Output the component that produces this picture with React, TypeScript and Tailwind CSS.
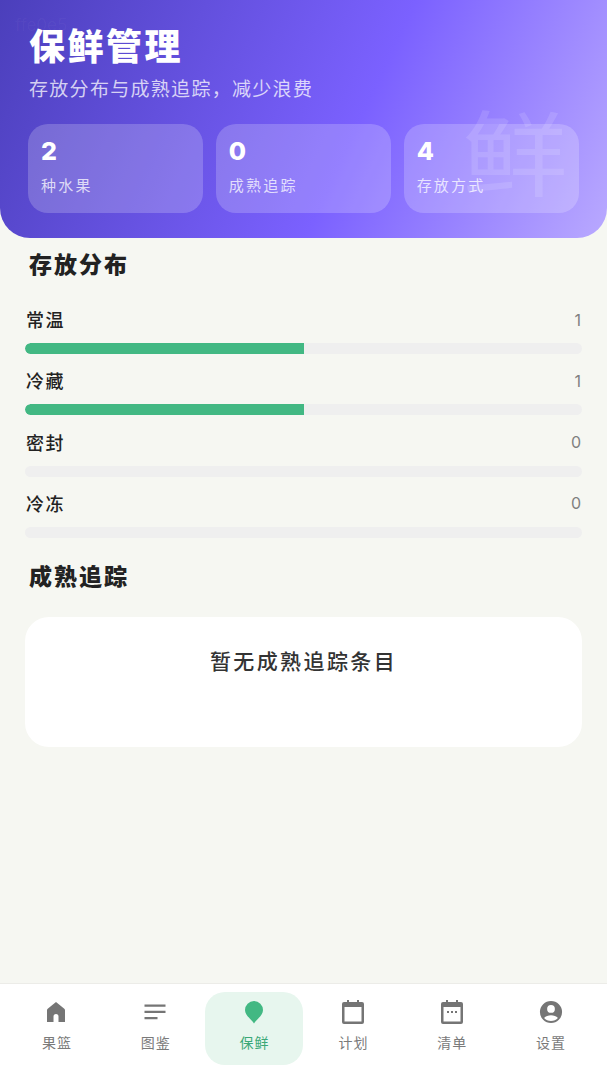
const font = { fontFamily: '"Noto Sans CJK SC", Inter, sans-serif' };

function Stat({ value, label }: { value: string; label: string }) {
  return (
    <div className="flex-1 h-[89px] rounded-[20px] bg-white/20 pl-[13px] pt-[12px]">
      <div className="text-[25px] leading-[30px] font-extrabold text-white font-['Inter']">{value}</div>
      <div className="mt-[9px] text-[15px] leading-[20px] text-white/75 tracking-[2.2px]">{label}</div>
    </div>
  );
}

function Row({ label, value, pct }: { label: string; value: string; pct: string }) {
  return (
    <div className="h-[61.33px]">
      <div className="flex justify-between items-center h-[24px] px-[1px]">
        <span className="text-[18px] leading-[24px] font-medium text-[#222] tracking-[1.5px]">{label}</span>
        <span className="pt-[1px] text-[16px] leading-[24px] text-[#808080] font-['Inter']">{value}</span>
      </div>
      <div className="mt-[12px] h-[11px] rounded-full bg-[#efefef] overflow-hidden">
        <div className={`h-full bg-[#42b883] rounded-l-full ${pct}`} />
      </div>
    </div>
  );
}

function NavItem({ icon, label, active }: { icon: React.ReactNode; label: string; active?: boolean }) {
  return (
    <div className={`flex-1 h-[73px] rounded-[20px] flex flex-col items-center pt-[8px] ${active ? 'bg-[#e7f6ee]' : ''}`}>
      <div className="w-[24px] h-[24px] flex items-center justify-center">{icon}</div>
      <div className={`mt-[9px] pl-[1px] text-[14px] leading-[18px] tracking-[1px] ${active ? 'text-[#3aa877]' : 'text-[#7a7a7a]'}`}>{label}</div>
    </div>
  );
}

const G = '#757575';
const icons = {
  home: (
    <svg width="24" height="24" viewBox="0 0 24 24"><path fill={G} d="M12 2 4 8.500a2 2 0 0 0-1 1.700V22h6.500v-5.500a2.500 2.500 0 0 1 5 0V22H21V10.200a2 2 0 0 0-1-1.700z" /></svg>
  ),
  list: (
    <svg width="24" height="24" viewBox="0 0 24 24"><path fill={G} d="M1.500 4.500h21v2.200h-21zM1.500 10.700h21v2.200h-21zM1.500 17h13v2.200h-13z" /></svg>
  ),
  pin: (
    <svg width="24" height="24" viewBox="0 0 24 24"><path fill="#42b883" d="M12 23.500C10 20 3 15.500 3 10a9 9 0 0 1 18 0c0 5.500-7 10-9 13.500z" /></svg>
  ),
  cal: (
    <svg width="24" height="24" viewBox="0 0 24 24"><path fill={G} d="M6 0h2v2h8V0h2v2h3a2 2 0 0 1 2 2v18a2 2 0 0 1-2 2H3a2 2 0 0 1-2-2V4a2 2 0 0 1 2-2h3zM3.500 7v14.500h17V7z" /></svg>
  ),
  calDots: (
    <svg width="24" height="24" viewBox="0 0 24 24"><path fill={G} d="M6 0h2v2h8V0h2v2h3a2 2 0 0 1 2 2v18a2 2 0 0 1-2 2H3a2 2 0 0 1-2-2V4a2 2 0 0 1 2-2h3zM3.500 7v14.500h17V7z" /><path fill={G} d="M7 11h2v2H7zM11 11h2v2h-2zM15 11h2v2h-2z" /></svg>
  ),
  user: (
    <svg width="28" height="28" viewBox="0 0 26 26"><path fill={G} fillRule="evenodd" d="M13 1a12 12 0 1 1 0 24 12 12 0 0 1 0-24zm0 4.500a4.200 4.200 0 1 0 0 8.400 4.200 4.200 0 0 0 0-8.400zM5.500 19.500c1.700 2.300 4.500 3.300 7.500 3.300s5.800-1 7.500-3.300c-1.700-2-4.600-3-7.500-3s-5.800 1-7.500 3z" /></svg>
  ),
};

export default function App() {
  return (
    <div style={font} className="w-[607px] h-[1080px] bg-[#f6f7f2] flex flex-col overflow-hidden">
      <header className="relative h-[238px] shrink-0 rounded-b-[30px] overflow-hidden bg-[linear-gradient(115deg,#4b3fbb_0%,#7b61ff_58%,#b9a9ff_100%)] px-[28px]">
        <div className="absolute left-[15px] top-[14px] text-[17px] leading-[22px] text-white/[0.04] font-['Inter']">ffe0e5</div>
        <div className="absolute right-[39px] top-[89px] text-[106px] leading-[120px] text-white/[0.12] select-none scale-y-[0.88]">鲜</div>
        <h1 className="pt-[23px] text-[36px] leading-[42px] font-black text-white tracking-[2.500px] pl-[1px]">保鲜管理</h1>
        <p className="mt-[8px] text-[19px] leading-[30px] text-white/75 tracking-[1.300px] pl-[1px]">存放分布与成熟追踪{'\uFF0C'}减少浪费</p>
        <div className="relative mt-[21px] flex gap-[12.500px]">
          <Stat value="2" label="种水果" />
          <Stat value="0" label="成熟追踪" />
          <Stat value="4" label="存放方式" />
        </div>
      </header>

      <main className="flex-1 px-[25px]">
        <h2 className="mt-[9px] pl-[4px] text-[23px] leading-[32px] font-extrabold text-[#222] tracking-[2px]">存放分布</h2>
        <div className="mt-[28px]">
          <Row label="常温" value="1" pct="w-1/2" />
          <Row label="冷藏" value="1" pct="w-1/2" />
          <Row label="密封" value="0" pct="w-0" />
          <Row label="冷冻" value="0" pct="w-0" />
        </div>
        <h2 className="mt-[7px] pl-[4px] text-[23px] leading-[32px] font-extrabold text-[#222] tracking-[2px]">成熟追踪</h2>
        <div className="mt-[26px] h-[130px] rounded-[24px] bg-white pt-[27px] text-center text-[21px] leading-[32px] font-medium text-[#333] tracking-[2.400px]">
          暂无成熟追踪条目
        </div>
      </main>

      <nav className="h-[97px] shrink-0 bg-white border-t border-[#ecece8] flex px-[7px] pt-[8px] items-start">
        <NavItem icon={icons.home} label="果篮" />
        <NavItem icon={icons.list} label="图鉴" />
        <NavItem icon={icons.pin} label="保鲜" active />
        <NavItem icon={icons.cal} label="计划" />
        <NavItem icon={icons.calDots} label="清单" />
        <NavItem icon={icons.user} label="设置" />
      </nav>
    </div>
  );
}
